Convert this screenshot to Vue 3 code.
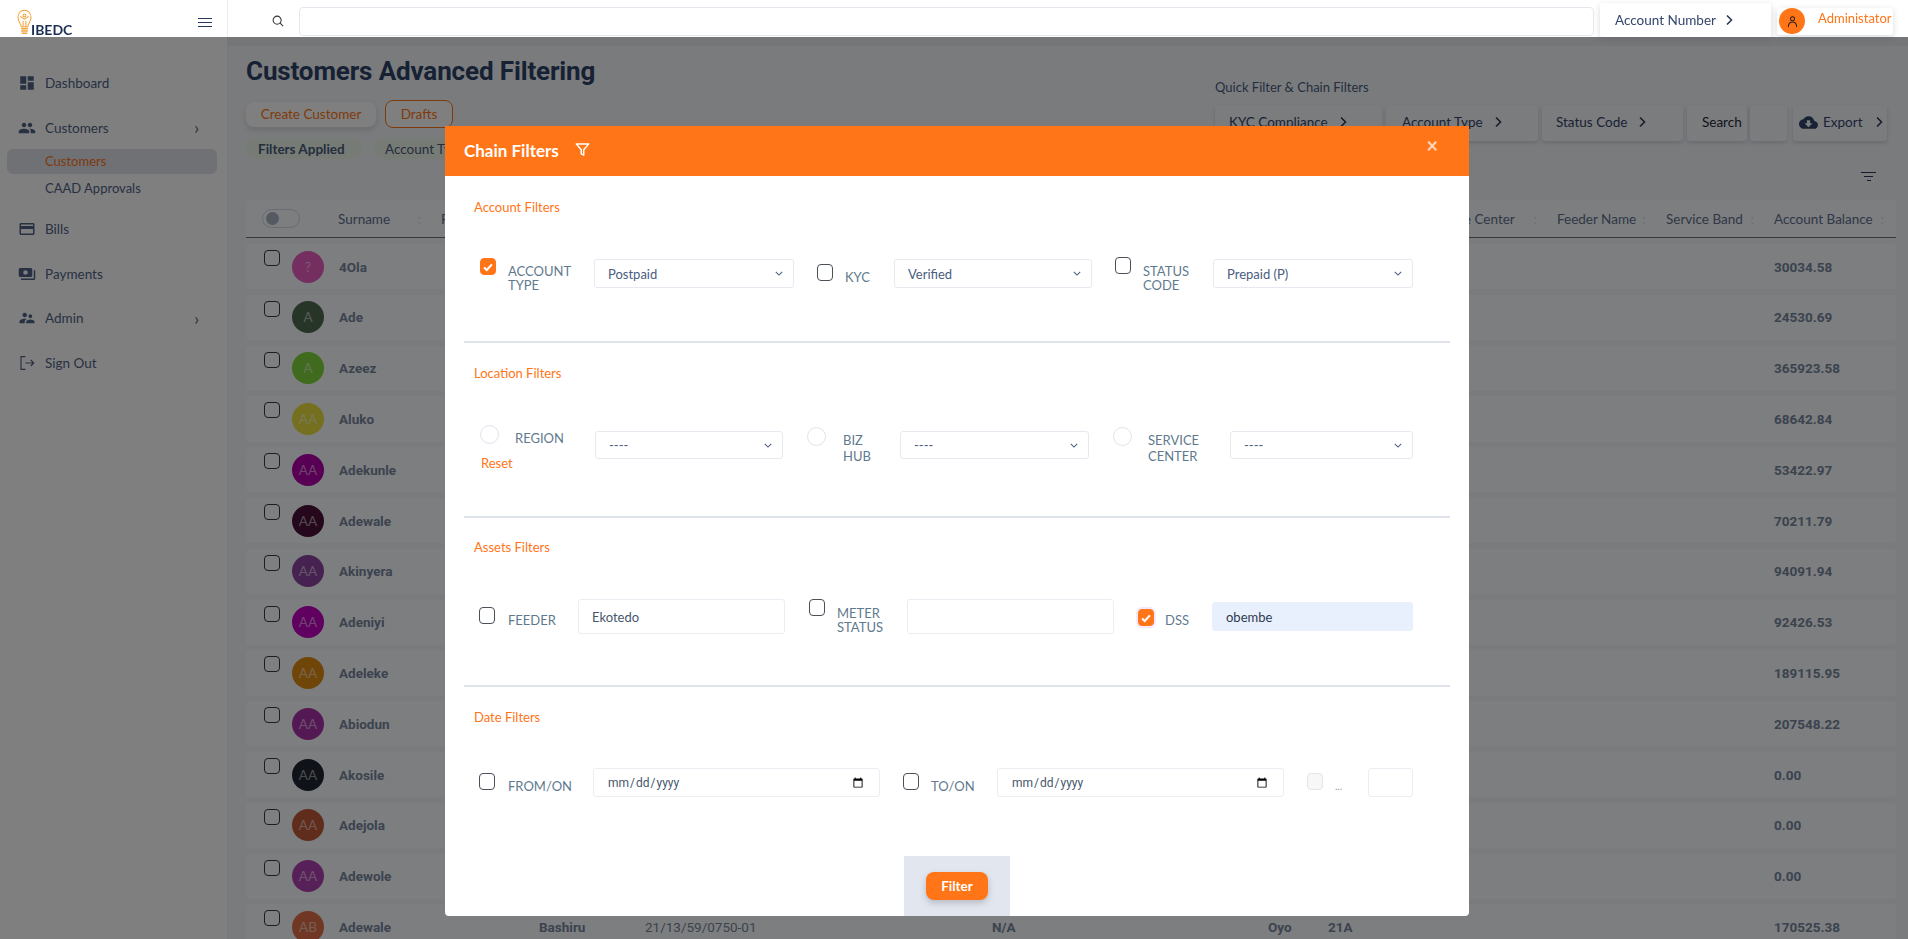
<template>
  <div class="app">
    <header class="topbar">
      <div class="brand">
        <svg class="bulb" viewBox="0 0 16 28" fill="none" stroke="#f3a33a" stroke-width="1.1">
          <path d="M4.5 18.5C4.5 15.5 1 13.5 1 8.5 1 4 4 1 8 1s7 3 7 7.500c0 5-3.500 7-3.500 10z" />
          <circle cx="8" cy="6.500" r="1.500" />
          <path d="M3.500 7.500 8 10.500l4.500-3M6.500 18V12M9.500 18V12" />
          <path d="M4.500 20.500h7M4.500 23h7M5 25.500h6" stroke-width="1.700" />
        </svg>
        <span class="brand-name">IBEDC</span>
        <div class="burger"><i></i><i></i><i></i></div>
      </div>
      <svg class="search-icon" viewBox="0 0 14 14" fill="none" stroke="#333" stroke-width="1.200">
        <circle cx="6" cy="6" r="4.700" />
        <path d="M9.500 9.500 13 13" />
      </svg>
      <input class="search" type="text" />
      <div class="acct-card">
        Account Number
        <svg class="chev" viewBox="0 0 8 12" fill="none" stroke="#2c3a55" stroke-width="1.600"><path d="M2 1.500 6.500 6 2 10.500" /></svg>
      </div>
      <div class="admin-card">
        <span class="admin-pic">
          <svg viewBox="0 0 12 14" fill="none" stroke="#2b2118" stroke-width="1.100"><circle cx="6" cy="4" r="2.200" /><path d="M1.500 13c0-4 2-5.500 4.500-5.500s4.500 1.500 4.500 5.500" /></svg>
        </span>
        <span class="admin-name">Administator</span>
      </div>
    </header>

    <div class="shell">
      <aside class="sidebar">
        <nav>
          <a class="nav nav-dash">
            <svg viewBox="0 0 24 24"><path d="M3 13h8V3H3v10zm0 8h8v-6H3v6zm10 0h8V11h-8v10zm0-18v6h8V3h-8z" /></svg>
            Dashboard
          </a>
          <a class="nav">
            <svg viewBox="0 0 24 24"><path d="M16 11c1.660 0 2.990-1.340 2.990-3S17.660 5 16 5c-1.660 0-3 1.340-3 3s1.340 3 3 3zm-8 0c1.660 0 2.990-1.340 2.990-3S9.660 5 8 5C6.340 5 5 6.340 5 8s1.340 3 3 3zm0 2c-2.330 0-7 1.170-7 3.500V19h14v-2.500c0-2.330-4.670-3.500-7-3.500zm8 0c-.290 0-.620.020-.970.050 1.160.840 1.970 1.970 1.970 3.450V19h6v-2.500c0-2.330-4.670-3.500-7-3.500z" /></svg>
            Customers
            <span class="nav-arrow">›</span>
          </a>
          <a class="sub sub-active">Customers</a>
          <a class="sub">CAAD Approvals</a>
          <a class="nav nav-bills">
            <svg viewBox="0 0 24 24"><path d="M20 4H4c-1.110 0-1.990.890-1.990 2L2 18c0 1.110.890 2 2 2h16c1.110 0 2-.890 2-2V6c0-1.110-.890-2-2-2zm0 14H4v-6h16v6zm0-10H4V6h16v2z" /></svg>
            Bills
          </a>
          <a class="nav">
            <svg viewBox="0 0 24 24"><path d="M19 14V6c0-1.100-.900-2-2-2H3c-1.100 0-2 .900-2 2v8c0 1.100.900 2 2 2h14c1.100 0 2-.900 2-2zm-9-1c-1.660 0-3-1.340-3-3s1.340-3 3-3 3 1.340 3 3-1.340 3-3 3zm13-6v11c0 1.100-.900 2-2 2H4v-2h17V7h2z" /></svg>
            Payments
          </a>
          <a class="nav">
            <svg viewBox="0 0 24 24"><path d="M16.500 12c1.380 0 2.490-1.120 2.490-2.500S17.880 7 16.500 7C15.120 7 14 8.120 14 9.500s1.120 2.500 2.500 2.500zM9 11c1.660 0 2.990-1.340 2.990-3S10.660 5 9 5C7.340 5 6 6.340 6 8s1.340 3 3 3zm7.500 3c-1.830 0-5.500.920-5.500 2.750V19h11v-2.250c0-1.830-3.670-2.750-5.500-2.750zM9 13c-2.330 0-7 1.170-7 3.500V19h7v-2.250c0-.850.330-2.340 2.370-3.470C10.500 13.100 9.660 13 9 13z" /></svg>
            Admin
            <span class="nav-arrow">›</span>
          </a>
          <a class="nav">
            <svg class="line" viewBox="0 0 24 24"><path d="M10 3.500H4v17h6M10 12h11M17 8l4 4-4 4" /></svg>
            Sign Out
          </a>
        </nav>
      </aside>

      <main class="main">
        <div class="toolbar">
          <div class="tool-left">
            <h1 class="page-title">Customers Advanced Filtering</h1>
            <div class="actions">
              <button class="btn-create" type="button">Create Customer</button>
              <button class="btn-drafts" type="button">Drafts</button>
            </div>
            <div class="chips">
              <span class="chip chip-bold">Filters Applied</span>
              <span class="chip">Account Type</span>
            </div>
          </div>
          <div class="tool-right">
            <div class="quick-label">Quick Filter &amp; Chain Filters</div>
            <div class="quick-btns">
              <div v-for="q in quick" :key="q.label" class="quick" :class="q.cls">
                {{ q.label }}
                <svg class="chev" viewBox="0 0 8 12" fill="none" stroke="#2c3a55" stroke-width="1.600"><path d="M2 1.500 6.500 6 2 10.500" /></svg>
              </div>
              <div class="quick q-search">Search</div>
              <div class="quick q-blank"></div>
              <div class="quick q-export">
                <svg class="cloud" viewBox="0 0 24 24"><path d="M19.350 10.040C18.670 6.590 15.640 4 12 4 9.110 4 6.600 5.640 5.350 8.040 2.340 8.360 0 10.910 0 14c0 3.310 2.690 6 6 6h13c2.760 0 5-2.240 5-5 0-2.640-2.050-4.780-4.650-4.960zM17 13l-5 5-5-5h3V9h4v4h3z" /></svg>
                Export
                <svg class="chev" viewBox="0 0 8 12" fill="none" stroke="#2c3a55" stroke-width="1.600"><path d="M2 1.500 6.500 6 2 10.500" /></svg>
              </div>
            </div>
            <div class="sort-lines"><i></i><i></i><i></i></div>
          </div>
        </div>

        <div class="table">
          <div class="thead">
            <div class="th-toggle"><span class="toggle"><i></i></span></div>
            <div class="th th-sur">Surname</div>
            <div class="th-first">First</div>
            <div class="th th-svc">Service Center</div>
            <div class="th th-feed">Feeder Name</div>
            <div class="th th-band">Service Band</div>
            <div class="th th-bal">Account Balance</div>
          </div>
          <div class="tbody">
            <div v-for="r in rows" :key="r.name + r.bal" class="tr">
              <input class="row-check" type="checkbox" />
              <span class="avatar" :style="{ background: r.color }">{{ r.initials }}</span>
              <span class="td-name">{{ r.name }}</span>
              <span class="td-other">{{ r.other }}</span>
              <span class="td-acct">{{ r.acct }}</span>
              <span class="td-na">{{ r.na }}</span>
              <span class="td-hub">{{ r.hub }}</span>
              <span class="td-code">{{ r.code }}</span>
              <span class="td-bal">{{ r.bal }}</span>
            </div>
          </div>
        </div>
      </main>
    </div>

    <div class="overlay">
      <div class="modal">
        <div class="modal-head">
          <span class="modal-title">Chain Filters</span>
          <svg class="funnel" viewBox="0 0 24 24" fill="none" stroke="#fff" stroke-width="2.400" stroke-linejoin="round"><polygon points="22 3 2 3 10 12.500 10 19 14 21 14 12.500 22 3" /></svg>
          <span class="modal-close">×</span>
        </div>

        <section class="section sec-account">
          <div class="sec-title">Account Filters</div>
          <div class="row row-account">
            <div class="field f-a1">
              <input class="check" type="checkbox" v-model="acctOn" />
              <label class="lab lh14 t6">ACCOUNT TYPE</label>
              <select class="ctl sel h29 t1" v-model="acctType"><option>Postpaid</option><option>Prepaid</option></select>
            </div>
            <div class="field f-a2">
              <input class="check t6" type="checkbox" />
              <label class="lab lh14 t12">KYC</label>
              <select class="ctl sel h29 t1" v-model="kyc"><option>Verified</option><option>Unverified</option></select>
            </div>
            <div class="field f-a3">
              <input class="check tn1" type="checkbox" />
              <label class="lab lh14 t6">STATUS CODE</label>
              <select class="ctl sel h29 t1" v-model="status"><option>Prepaid (P)</option><option>Active (A)</option></select>
            </div>
          </div>
        </section>

        <section class="section sec-location">
          <div class="sec-title">Location Filters</div>
          <div class="row row-location">
            <div class="field f-l1">
              <input class="radio t1" type="radio" name="loc" />
              <label class="lab lh16 t6">REGION</label>
              <select class="ctl sel h28 t7"><option>----</option></select>
              <a class="reset">Reset</a>
            </div>
            <div class="field f-l2">
              <input class="radio t3" type="radio" name="loc" />
              <label class="lab lh16 t8">BIZ<br />HUB</label>
              <select class="ctl sel h28 t7"><option>----</option></select>
            </div>
            <div class="field f-l3">
              <input class="radio t3" type="radio" name="loc" />
              <label class="lab lh16 t8">SERVICE<br />CENTER</label>
              <select class="ctl sel h28 t7"><option>----</option></select>
            </div>
          </div>
        </section>

        <section class="section sec-assets">
          <div class="sec-title">Assets Filters</div>
          <div class="row row-assets">
            <div class="field f-s1">
              <input class="check t9" type="checkbox" />
              <label class="lab lh14 t15">FEEDER</label>
              <input class="ctl txt h35 t1" type="text" v-model="feeder" />
            </div>
            <div class="field f-s2">
              <input class="check t1" type="checkbox" />
              <label class="lab lh14 t8">METER STATUS</label>
              <input class="ctl txt h35 t1" type="text" />
            </div>
            <div class="field f-s3">
              <input class="check ring t11" type="checkbox" v-model="dssOn" />
              <label class="lab lh14 t15">DSS</label>
              <input class="ctl txt filled h29 t4" type="text" v-model="dss" />
            </div>
          </div>
        </section>

        <section class="section sec-date">
          <div class="sec-title">Date Filters</div>
          <div class="row row-date">
            <div class="field f-d1">
              <input class="check t5" type="checkbox" />
              <label class="lab lh14 t11">FROM/ON</label>
              <input class="ctl date h29" type="date" />
            </div>
            <div class="field f-d2">
              <input class="check t5" type="checkbox" />
              <label class="lab lh14 t11">TO/ON</label>
              <input class="ctl date h29" type="date" />
            </div>
            <div class="field f-d3">
              <input class="check t5" type="checkbox" disabled />
              <label class="lab-tiny">...</label>
              <input class="ctl txt h29" type="text" />
            </div>
          </div>
        </section>

        <div class="modal-foot">
          <div class="foot-box"><button class="btn-filter" type="button">Filter</button></div>
        </div>
      </div>
    </div>
  </div>
</template>

<script setup>
import { ref } from 'vue'

const acctOn = ref(true)
const acctType = ref('Postpaid')
const kyc = ref('Verified')
const status = ref('Prepaid (P)')
const feeder = ref('Ekotedo')
const dssOn = ref(true)
const dss = ref('obembe')

const quick = [
  { label: 'KYC Compliance', cls: 'q-kyc' },
  { label: 'Account Type', cls: 'q-type' },
  { label: 'Status Code', cls: 'q-status' }
]

const rows = [
  { name: '4Ola', initials: '?', color: '#e85fc0', bal: '30034.58' },
  { name: 'Ade', initials: 'A', color: '#4f6a50', bal: '24530.69' },
  { name: 'Azeez', initials: 'A', color: '#80d43a', bal: '365923.58' },
  { name: 'Aluko', initials: 'AA', color: '#e8e040', bal: '68642.84' },
  { name: 'Adekunle', initials: 'AA', color: '#b000a8', bal: '53422.97' },
  { name: 'Adewale', initials: 'AA', color: '#4a1038', bal: '70211.79' },
  { name: 'Akinyera', initials: 'AA', color: '#8c44a0', bal: '94091.94' },
  { name: 'Adeniyi', initials: 'AA', color: '#c000c0', bal: '92426.53' },
  { name: 'Adeleke', initials: 'AA', color: '#e08a10', bal: '189115.95' },
  { name: 'Abiodun', initials: 'AA', color: '#a830a8', bal: '207548.22' },
  { name: 'Akosile', initials: 'AA', color: '#1e2430', bal: '0.00' },
  { name: 'Adejola', initials: 'AA', color: '#c05838', bal: '0.00' },
  { name: 'Adewole', initials: 'AA', color: '#b040b0', bal: '0.00' },
  { name: 'Adewale', initials: 'AB', color: '#e07048', other: 'Bashiru', acct: '21/13/59/0750-01', na: 'N/A', hub: 'Oyo', code: '21A', bal: '170525.38' }
]
</script>

<style>
html,
body {
  margin: 0;
  height: 100%;
  overflow: hidden;
  background: #fff;
}
</style>

<style scoped>
.app {
  width: 1908px;
  height: 939px;
  overflow: hidden;
  font-family: Lato, "Noto Sans", sans-serif;
  font-size: 14px;
  color: #4a5d80;
}

/* top bar stays above the backdrop */
.topbar {
  position: relative;
  z-index: 20;
  height: 37px;
  display: flex;
  background: #fff;
}

.brand {
  width: 228px;
  flex: none;
  box-sizing: border-box;
  border-right: 1px solid #e8ecf3;
  padding: 9px 15px 0 17px;
  display: flex;
  align-items: flex-start;
}

.bulb {
  width: 15px;
  height: 27px;
  flex: none;
}

.brand-name {
  margin: 14px 0 0 -1px;
  font-size: 14px;
  line-height: 14px;
  font-weight: 700;
  color: #1b2f52;
}

.burger {
  margin: 9px 0 0 auto;
  width: 14px;
  display: flex;
  flex-direction: column;
  gap: 3px;
}

.burger i {
  height: 1px;
  background: #26395e;
}

.search-icon {
  width: 12px;
  height: 12px;
  margin: 15px 15px 0 44px;
  flex: none;
}

.search {
  width: 1295px;
  height: 29px;
  box-sizing: border-box;
  margin-top: 7px;
  border: 1px solid #e4e7ee;
  border-radius: 4px;
  outline: none;
  background: #fff;
}

.acct-card {
  width: 171px;
  height: 34px;
  box-sizing: border-box;
  margin: 3px 0 0 6px;
  padding: 0 0 0 15px;
  display: flex;
  align-items: center;
  gap: 9px;
  border-radius: 2px;
  background: #fff;
  box-shadow: 0 2px 6px rgba(60, 70, 90, 0.2);
  font-size: 13.5px;
  color: #33456b;
}

.chev {
  width: 8px;
  height: 12px;
  flex: none;
}

.admin-card {
  width: 116px;
  height: 27px;
  box-sizing: border-box;
  margin: 8px 0 0 6px;
  padding-left: 2px;
  display: flex;
  border-radius: 3px;
  background: #fff;
  box-shadow: 0 2px 6px rgba(60, 70, 90, 0.2);
}

.admin-pic {
  width: 26px;
  height: 26px;
  flex: none;
  border-radius: 50%;
  background: #ff7518;
  display: flex;
  align-items: center;
  justify-content: center;
}

.admin-pic svg {
  width: 11px;
  height: 13px;
}

.admin-name {
  margin: 2px 0 0 13px;
  line-height: 16px;
  font-size: 13px;
  color: #ff7518;
  white-space: nowrap;
}

/* page under the backdrop */
.shell {
  display: flex;
  height: 902px;
}

.sidebar {
  width: 228px;
  flex: none;
  box-sizing: border-box;
  background: #fff;
  border-right: 1px solid #eef0f4;
  padding-top: 24px;
}

.nav {
  height: 44.5px;
  display: flex;
  align-items: center;
  padding-left: 18px;
  gap: 9px;
  font-size: 13.5px;
  color: #4f6285;
}

.nav svg {
  width: 18px;
  height: 18px;
  flex: none;
  fill: #4f6285;
}

.nav svg.line {
  fill: none;
  stroke: #4f6285;
  stroke-width: 1.500;
}

.nav-arrow {
  margin-left: auto;
  margin-right: 28px;
  font-size: 17px;
  line-height: 1;
}

.sub {
  display: block;
  height: 25px;
  margin: 0 10px 2px 7px;
  padding-left: 38px;
  line-height: 25px;
  border-radius: 6px;
  font-size: 13px;
  color: #4f6285;
}

.sub-active {
  margin-top: -1px;
  background: #dee2ea;
  color: #ff7518;
}

.nav-bills {
  margin-top: 6px;
}

.main {
  flex: 1;
  min-width: 0;
  box-sizing: border-box;
  border-top: 9px solid #ebedf1;
  background: #f5f7fb;
}

.toolbar {
  height: 154px;
  display: flex;
  justify-content: space-between;
  padding: 0 21px 0 18px;
}

.tool-left {
  padding-top: 9px;
}

.page-title {
  margin: 0;
  font-family: Roboto, sans-serif;
  font-size: 26px;
  line-height: 32px;
  font-weight: 700;
  letter-spacing: -0.13px;
  color: #2f4268;
}

.actions {
  margin-top: 13px;
  display: flex;
  align-items: center;
  gap: 9px;
}

.btn-create,
.btn-drafts {
  font: inherit;
  font-size: 13.5px;
  color: #ff7518;
  background: #fff;
  border-radius: 8px;
  cursor: pointer;
}

.btn-create {
  width: 130px;
  height: 25px;
  border: none;
  box-shadow: 0 3px 6px rgba(40, 50, 70, 0.15);
}

.btn-drafts {
  width: 68px;
  height: 28px;
  border: 1px solid #ff7518;
}

.chips {
  margin-top: 11px;
  display: flex;
  gap: 11px;
}

.chip {
  height: 20px;
  padding: 0 12px;
  line-height: 20px;
  border-radius: 10px;
  background: #eef7ea;
  font-size: 13.5px;
}

.chip-bold {
  width: 92px;
  font-weight: 700;
}

.tool-right {
  padding-top: 32px;
  display: flex;
  flex-direction: column;
}

.quick-label {
  line-height: 18px;
  font-size: 13px;
  margin-bottom: 9px;
}

.quick-btns {
  display: flex;
  gap: 4px;
}

.quick {
  height: 36px;
  box-sizing: border-box;
  padding: 0 0 2px 14px;
  display: flex;
  align-items: center;
  gap: 11px;
  border-radius: 3px;
  background: #f7f8fb;
  box-shadow: 0 2px 4px rgba(40, 50, 70, 0.18);
  font-size: 13.5px;
  color: #33456b;
}

.q-kyc { width: 167px; }
.q-type { width: 152px; padding-left: 16px; }
.q-status { width: 141px; }
.q-search { width: 60px; padding-left: 15px; color: #1f2a40; }
.q-blank { width: 37px; margin-left: -1px; }
.q-export { width: 94px; margin-left: 2px; padding-left: 6px; gap: 5px; }
.q-export .chev { margin-left: 7px; }

.cloud {
  width: 19px;
  height: 19px;
  flex: none;
  fill: #33456b;
}

.sort-lines {
  margin: 31px 11px 0 auto;
  width: 15px;
  display: flex;
  flex-direction: column;
  align-items: center;
  gap: 3px;
}

.sort-lines i {
  height: 1px;
  background: #26395e;
  width: 15px;
}

.sort-lines i:nth-child(2) { width: 9px; }
.sort-lines i:nth-child(3) { width: 4px; }

.table {
  margin: 0 12px 0 18px;
}

.thead {
  height: 38px;
  box-sizing: border-box;
  display: flex;
  align-items: center;
  border-bottom: 1px solid #6c7078;
  background: #fbfcfe;
  border-radius: 4px 4px 0 0;
  font-size: 13.5px;
}

.th-toggle {
  width: 92px;
  flex: none;
  padding-left: 16px;
  box-sizing: border-box;
}

.toggle {
  width: 38px;
  height: 19px;
  box-sizing: border-box;
  display: flex;
  align-items: center;
  padding-left: 3px;
  border: 1px solid #d2d8e4;
  border-radius: 10px;
}

.toggle i {
  width: 13px;
  height: 13px;
  border-radius: 50%;
  background: #aab2c2;
}

.th {
  position: relative;
  flex: none;
  box-sizing: border-box;
  color: #5f7090;
  white-space: nowrap;
}

.th::after {
  content: ':';
  position: absolute;
  right: 20px;
  top: 0;
  color: #dcdfe5;
}

.th-sur { width: 103px; }
.th-first { margin-right: auto; white-space: nowrap; color: #5f7090; }
.th-svc { width: 129px; }
.th-feed { width: 109px; }
.th-band { width: 108px; }
.th-bal { width: 122px; }
.th-bal::after { right: 12px; }

.tbody {
  margin-top: 6px;
  display: flex;
  flex-direction: column;
  gap: 5.5px;
}

.tr {
  height: 45.3px;
  flex: none;
  display: flex;
  align-items: center;
  padding-left: 18px;
  border-radius: 4px;
  background: #fbfcfe;
  font-family: Roboto, sans-serif;
  font-weight: 700;
  font-size: 13.5px;
  color: #76879f;
}

.row-check {
  appearance: none;
  width: 16px;
  height: 16px;
  flex: none;
  align-self: flex-start;
  box-sizing: border-box;
  margin: 6px 12px 0 0;
  border: 1px solid #333b48;
  border-radius: 4px;
  background: #fff;
}

.avatar {
  width: 32px;
  height: 32px;
  flex: none;
  margin-right: 15px;
  border-radius: 50%;
  display: flex;
  align-items: center;
  justify-content: center;
  font-family: Lato, sans-serif;
  font-weight: 400;
  color: rgba(255, 255, 255, 0.55);
}

.td-name { width: 200px; flex: none; }
.td-other { width: 106px; flex: none; }
.td-acct { width: 347px; flex: none; font-weight: 400; }
.td-na { width: 276px; flex: none; }
.td-hub { width: 60px; flex: none; }
.td-code { width: 446px; flex: none; }
.td-bal { flex: none; }

/* backdrop and modal */
.overlay {
  position: fixed;
  left: 0;
  right: 0;
  top: 37px;
  bottom: 0;
  z-index: 10;
  box-sizing: border-box;
  padding: 89px 0 0 6px;
  display: flex;
  justify-content: center;
  background: rgba(0, 0, 0, 0.5);
}

.modal {
  width: 1024px;
  height: 790px;
  border-radius: 0 0 4px 4px;
  background: #fff;
  overflow: hidden;
}

.modal-head {
  height: 50px;
  padding-left: 19px;
  display: flex;
  align-items: center;
  background: #ff7518;
  color: #fff;
}

.modal-title {
  margin-top: -2px;
  font-size: 17px;
  font-weight: 700;
}

.funnel {
  width: 15px;
  height: 15px;
  margin: -3px 0 0 16px;
}

.modal-close {
  margin: -12px 0 0 auto;
  margin-right: 31px;
  font-size: 20px;
  font-weight: 700;
  line-height: 20px;
  opacity: 0.7;
}

.section {
  box-sizing: border-box;
  margin: 0 19px;
  padding-top: 20px;
  border-bottom: 2px solid #dfe3ec;
}

.sec-account { height: 167px; padding-top: 21px; }
.sec-location { height: 175px; }
.sec-assets { height: 169px; padding-top: 19px; }
.sec-date { height: 169px; border-bottom: none; }

.sec-title {
  height: 20px;
  margin: 0 0 41px 10px;
  line-height: 20px;
  font-size: 13px;
  color: #ff7518;
}

.row {
  display: flex;
  padding-left: 15px;
}

.row-account { padding-left: 16px; gap: 23px; }
.row-location { padding-left: 16px; gap: 24px; }
.row-assets { gap: 24px; }
.row-date { gap: 23px; }

.field {
  display: grid;
  align-items: start;
}

.f-a1 { grid-template-columns: 28px 86px 200px; }
.f-a2 { grid-template-columns: 28px 49px 198px; }
.f-a3 { grid-template-columns: 28px 70px 200px; }
.f-l1 { grid-template-columns: 35px 80px 188px; }
.f-l2 { grid-template-columns: 36px 57px 189px; }
.f-l3 { grid-template-columns: 35px 82px 183px; }
.f-s1 { grid-template-columns: 29px 70px 207px; }
.f-s2 { grid-template-columns: 28px 70px 207px; }
.f-s3 { grid-template-columns: 27px 47px 201px; }
.f-d1 { grid-template-columns: 29px 85px 287px; }
.f-d2 { grid-template-columns: 28px 66px 287px; }
.f-d3 { grid-template-columns: 28px 33px 45px; }

.lab {
  color: #5f7a8e;
  font-size: 13px;
}

.lh14 { line-height: 14px; }
.lh16 { line-height: 16px; }

.lab-tiny {
  margin-top: 12px;
  font-size: 10px;
  line-height: 12px;
  color: #8592a6;
}

.reset {
  grid-column: 1 / 3;
  margin: -4px 0 0 1px;
  line-height: 16px;
  font-size: 13px;
  color: #ff7518;
}

.check,
.radio {
  appearance: none;
  box-sizing: border-box;
  margin: 0;
  background: #fff;
}

.check {
  width: 16px;
  height: 17px;
  border: 1px solid #4a4f58;
  border-radius: 4px;
}

.check:checked {
  border-color: #ff7518;
  background: #ff7518 url("data:image/svg+xml,%3Csvg xmlns='http://www.w3.org/2000/svg' viewBox='0 0 16 16'%3E%3Cpath d='M3.500 8.500l3 3 6-6.500' fill='none' stroke='white' stroke-width='2.400'/%3E%3C/svg%3E") center / 14px no-repeat;
}

.check:disabled {
  border-color: #e2e4e8;
  background: #f7f7f8;
}

.ring:checked {
  box-shadow: 0 0 0 2px #f4e9fb;
}

.radio {
  width: 19px;
  height: 19px;
  border: 1px solid #dfe3ec;
  border-radius: 50%;
}

.ctl {
  width: 100%;
  box-sizing: border-box;
  border: 1px solid #e6e9f0;
  border-radius: 3px;
  outline: none;
  background-color: #fff;
  font-family: Lato, sans-serif;
  font-size: 13px;
  color: #4a5d80;
  padding: 0 13px;
}

.sel {
  appearance: none;
  background-image: url("data:image/svg+xml,%3Csvg xmlns='http://www.w3.org/2000/svg' viewBox='0 0 10 6'%3E%3Cpath d='M1 1l4 4 4-4' fill='none' stroke='%234a5d80' stroke-width='1.300'/%3E%3C/svg%3E");
  background-repeat: no-repeat;
  background-size: 8px 5px;
  background-position: right 10px center;
}

.txt {
  color: #46566c;
  border-color: #eaeef2;
}

.filled {
  background: #e8f0fe;
  border-color: #e8f0fe;
  color: #303b4c;
}

.date {
  border-color: #eaeef2;
  font-family: Roboto, sans-serif;
  font-size: 12px;
  color: #46566c;
}

.h28 { height: 28px; }
.h29 { height: 29px; }
.h35 { height: 35px; }

.tn1 { margin-top: -1px; }
.t1 { margin-top: 1px; }
.t3 { margin-top: 3px; }
.t4 { margin-top: 4px; }
.t5 { margin-top: 5px; }
.t6 { margin-top: 6px; }
.t7 { margin-top: 7px; }
.t8 { margin-top: 8px; }
.t9 { margin-top: 9px; }
.t11 { margin-top: 11px; }
.t12 { margin-top: 12px; }
.t15 { margin-top: 15px; }

.modal-foot {
  display: flex;
  padding-left: 459px;
}

.foot-box {
  width: 106px;
  height: 60px;
  box-sizing: border-box;
  padding: 16px 0 0 22px;
  background: #e2e6ef;
}

.btn-filter {
  width: 62px;
  height: 28px;
  border: none;
  border-radius: 8px;
  background: #ff7518;
  box-shadow: 0 3px 6px rgba(60, 60, 70, 0.25);
  color: #fff;
  font-family: Lato, sans-serif;
  font-size: 13.5px;
  font-weight: 700;
  cursor: pointer;
}
</style>
